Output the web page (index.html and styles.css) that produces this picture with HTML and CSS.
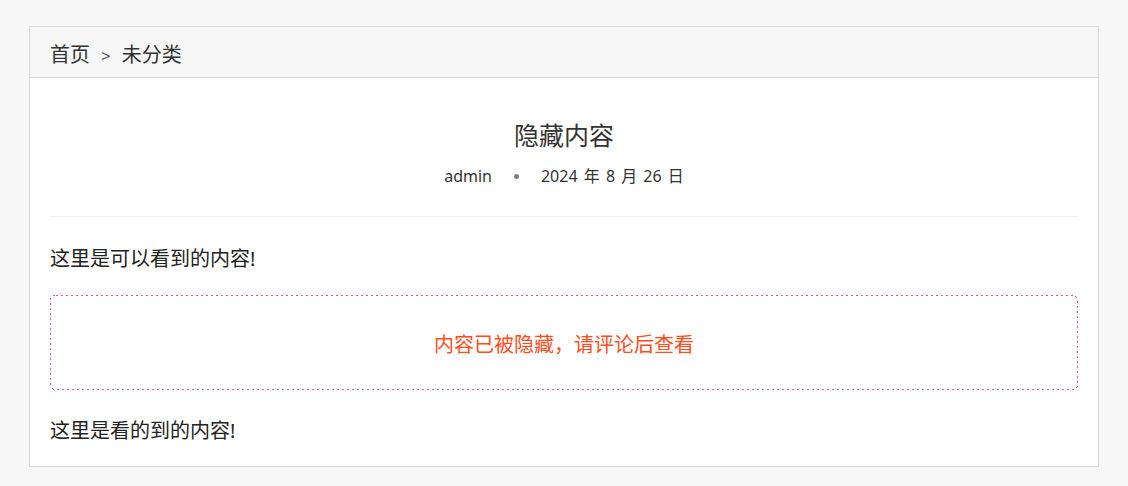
FILE: index.html
```html
<!DOCTYPE html>
<html lang="zh">
<head>
<meta charset="utf-8">
<title>隐藏内容</title>
<link rel="stylesheet" href="styles.css">
</head>
<body>
<div class="card">
  <div class="crumbs">
    <a class="crumb" href="#">首页</a>
    <span class="sep">&gt;</span>
    <a class="crumb" href="#">未分类</a>
  </div>
  <div class="content">
    <div class="post-head">
      <h1 class="title">隐藏内容</h1>
      <div class="meta">
        <span>admin</span>
        <span class="dot"></span>
        <span class="date">2024 年 8 月 26 日</span>
      </div>
    </div>
    <p class="para first">这里是可以看到的内容!</p>
    <div class="hidden-box">
      <svg class="frame" aria-hidden="true"><rect class="frame-rect" x="0.5" y="0.5" rx="5" ry="5"></rect></svg>
      内容已被隐藏，请评论后查看
    </div>
    <p class="para last">这里是看的到的内容!</p>
  </div>
</div>
</body>
</html>
```
FILE: styles.css
```css
html, body {
  margin: 0;
  padding: 0;
  background: #f7f7f7;
}
body {
  font-family: "Noto Sans", "Noto Sans CJK SC", sans-serif;
  color: #333;
  padding: 26px 29px 0 29px;
}
.card {
  width: 1070px;
  box-sizing: border-box;
  border: 1px solid #d9d9d9;
  background: #fff;
}
.crumbs {
  background: #f7f7f7;
  border-bottom: 1px solid #d9d9d9;
  padding: 13px 20px 7px;
  font-size: 20px;
  line-height: 30px;
  display: flex;
  align-items: center;
}
.crumb {
  color: #333;
  text-decoration: none;
}
.sep {
  font-size: 17px;
  color: #555;
  margin: 0 11px 0 11px;
  position: relative;
  top: 1px;
}
.content {
  padding: 20px;
}
.post-head {
  text-align: center;
  padding-top: 19px;
  padding-bottom: 28px;
  border-bottom: 1px solid #eee;
}
.title {
  margin: 0;
  font-size: 25px;
  font-weight: normal;
  line-height: 36px;
  color: #333;
}
.meta {
  margin-top: 11px;
  font-size: 16px;
  line-height: 24px;
  color: #333;
  display: flex;
  justify-content: center;
  align-items: center;
}
.date {
  word-spacing: 2px;
}
.dot {
  width: 5px;
  height: 5px;
  border-radius: 50%;
  background: #7a8088;
  margin: 0 22px;
}
.para {
  margin: 27px 0 0;
  font-size: 20px;
  line-height: 30px;
  color: #222;
}
.para.last {
  margin-top: 26px;
}
.hidden-box {
  position: relative;
  margin-top: 21px;
  padding: 35px 20px 30px;
  text-align: center;
  font-size: 20px;
  line-height: 30px;
  color: #ff4d1c;
}
.frame {
  position: absolute;
  inset: 0;
  width: 100%;
  height: 100%;
  overflow: visible;
  pointer-events: none;
}
.frame-rect {
  width: calc(100% - 1px);
  height: calc(100% - 1px);
  fill: none;
  stroke: #f0508e;
  stroke-width: 1;
  stroke-dasharray: 2 3;
  shape-rendering: crispEdges;
}
```
